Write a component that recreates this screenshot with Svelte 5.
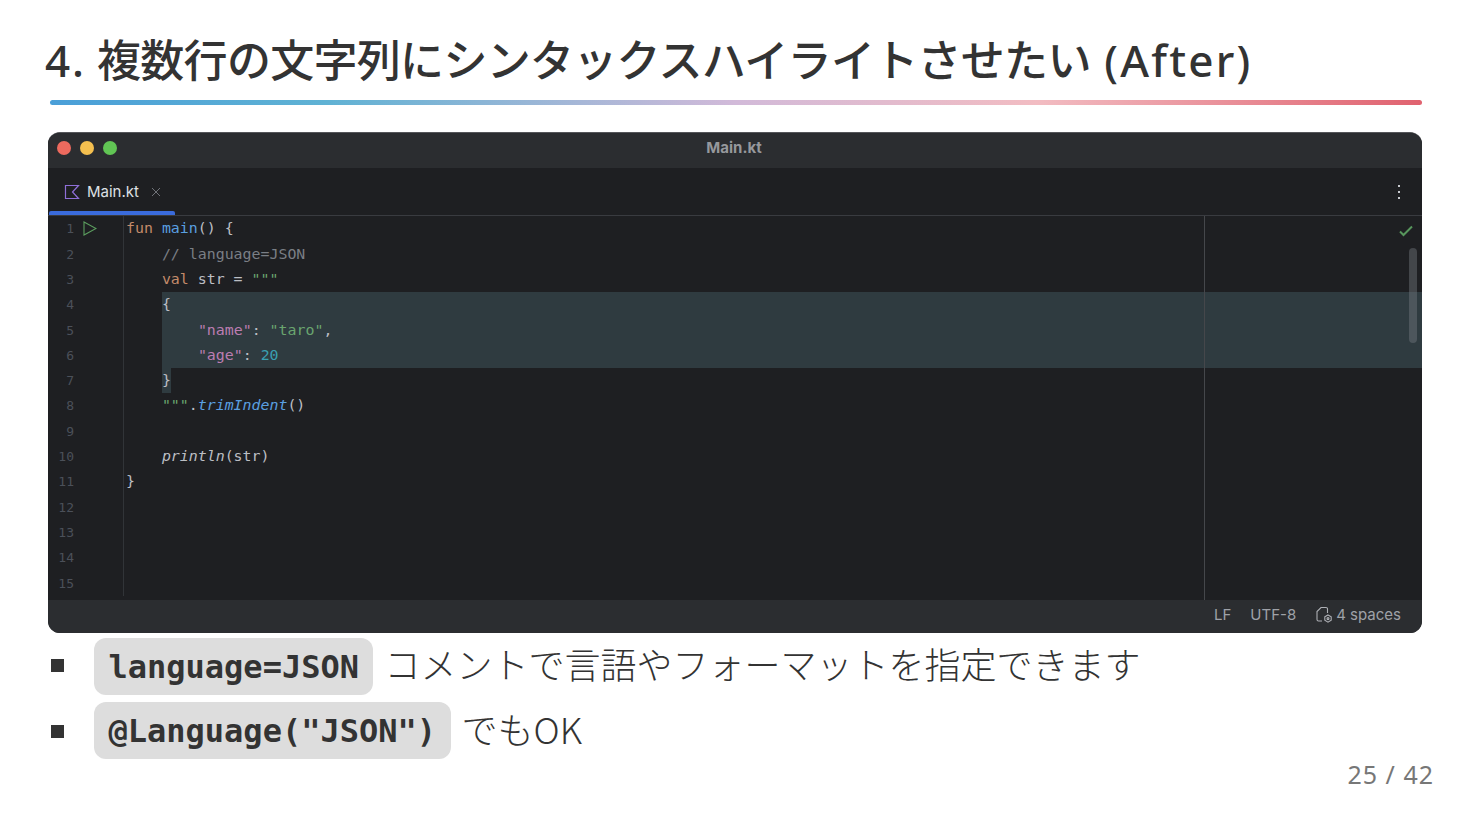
<script lang="ts">
  // k keyword, f function, c comment, s string, p json key, n number, i italic call
  type Tok = [string, string?];
  const lines: { toks: Tok[]; hl?: string }[] = [
    { toks: [["fun", "k"], [" "], ["main", "f"], ["() {"]] },
    { toks: [["    "], ["// language=JSON", "c"]] },
    { toks: [["    "], ["val", "k"], [" str = "], ['"""', "s"]] },
    { toks: [["{"]], hl: "full" },
    { toks: [["    "], ['"name"', "p"], [": "], ['"taro"', "s"], [","]], hl: "full" },
    { toks: [["    "], ['"age"', "p"], [": "], ["20", "n"]], hl: "full" },
    { toks: [["}", "brace"]], hl: "brace" },
    { toks: [["    "], ['"""', "s"], ["."], ["trimIndent", "fi"], ["()"]] },
    { toks: [] },
    { toks: [["    "], ["println", "i"], ["(str)"]] },
    { toks: [["}"]] },
    { toks: [] },
    { toks: [] },
    { toks: [] },
    { toks: [] },
  ];
</script>

<div class="slide">
  <h1><span class="lat num-part">{"4. "}</span>複数行の文字列にシンタックスハイライトさせたい<span class="lat after">{" (After)"}</span></h1>
  <div class="rule"></div>

  <div class="ide">
    <div class="titlebar">
      <div class="lights">
        <span class="light red"></span>
        <span class="light yellow"></span>
        <span class="light green"></span>
      </div>
      <span class="window-name">Main.kt</span>
    </div>

    <div class="tabs">
      <div class="tab">
        <svg width="16" height="16" viewBox="0 0 16 16" fill="none" stroke="#8f6fd8" stroke-width="1.2">
          <path d="M1.5 1.5h13L8.5 8l6 6.5h-13z" />
        </svg>
        <span class="tab-name">Main.kt</span>
        <svg class="close" width="10" height="10" viewBox="0 0 10 10" stroke="#6f7278" stroke-width="1">
          <path d="M1 1l8 8M9 1l-8 8" />
        </svg>
      </div>
      <div class="kebab"><i></i><i></i><i></i></div>
    </div>

    <div class="editor">
      {#each lines as line, i}
        <div class="row">
          <div class="gutter">
            <span class="num">{i + 1}</span>
            {#if i === 0}
              <svg class="run" width="14" height="15" viewBox="0 0 14 15" fill="none" stroke="#5c9e5f" stroke-width="1.1">
                <path d="M1 1l12 6.5L1 14z" />
              </svg>
            {/if}
          </div>
          <div class="code" class:full={line.hl === "full"}>
            <div class="text" class:brace={line.hl === "brace"}>{#each line.toks as t}<span class={t[1]}>{t[0]}</span>{/each}</div>
          </div>
        </div>
      {/each}
      <div class="margin-line"></div>
      <svg class="check" width="14" height="12" viewBox="0 0 14 12" fill="none" stroke="#57965c" stroke-width="2">
        <path d="M1 6.5l3.5 3.5L13 1.5" />
      </svg>
      <div class="scrollbar"></div>
    </div>

    <div class="status">
      <span>LF</span>
      <span>UTF-8</span>
      <span class="indent">
        <svg width="18" height="18" viewBox="0 0 18 18" fill="none" stroke="#aeb0b5" stroke-width="1.1">
          <path d="M7 15H3.5A1.5 1.5 0 0 1 2 13.5V5.5L6 1.5h5A1.5 1.5 0 0 1 12.5 3v4" />
          <path d="M13 9l3.2 1.8v3.5L13 16.2l-3.2-1.9v-3.5z" />
          <circle cx="13" cy="12.6" r="1" />
        </svg>
        4 spaces
      </span>
    </div>
  </div>

  <ul>
    <li><code>language=JSON</code><span>コメントで言語やフォーマットを指定できます</span></li>
    <li><code>@Language("JSON")</code><span>でもOK</span></li>
  </ul>

  <div class="page">25 / 42</div>
</div>

<style>
  :global(body) {
    margin: 0;
    background: #fff;
  }
  .slide {
    width: 1470px;
    height: 828px;
    overflow: hidden;
    box-sizing: border-box;
    padding: 0 48px;
    color: #333;
    font-family: "Noto Sans CJK JP", "Noto Sans", sans-serif;
  }
  h1 {
    margin: 0 0 0 -3px;
    padding-top: 26px;
    height: 64px;
    font-size: 44px;
    line-height: 64px;
    font-weight: 500;
    letter-spacing: -0.7px;
    white-space: nowrap;
    color: #333;
  }
  .lat {
    font-family: "Noto Sans", sans-serif;
    letter-spacing: 1.8px;
    white-space: pre;
  }
  .num-part {
    word-spacing: -2px;
  }
  .after {
    letter-spacing: 2.2px;
  }
  .rule {
    margin: 10px 0 0 2px;
    height: 5px;
    border-radius: 3px;
    background: linear-gradient(90deg, #4a9fd8 0%, #5fb2d4 20%, #d2bad9 50%, #f2bcc2 72%, #e0626f 100%);
  }
  .ide {
    margin-top: 27px;
    height: 501px;
    box-sizing: border-box;
    border-top: 1px solid #55565a;
    border-radius: 12px;
    overflow: hidden;
    background: #1e1f22;
    display: flex;
    flex-direction: column;
    font-family: Inter, "Noto Sans", sans-serif;
  }
  .titlebar {
    height: 35px;
    flex-shrink: 0;
    background: #2b2d30;
    display: flex;
    align-items: center;
    justify-content: center;
    position: relative;
  }
  .lights {
    position: absolute;
    left: 9px;
    top: 8px;
    display: flex;
    gap: 9px;
  }
  .light {
    width: 14px;
    height: 14px;
    border-radius: 50%;
  }
  .red { background: #ed6a5e; }
  .yellow { background: #f4bf4f; }
  .green { background: #61c554; }
  .window-name {
    font-size: 15px;
    font-weight: 700;
    color: #96989c;
    margin: 0 2px 6px 0;
  }
  .tabs {
    height: 48px;
    flex-shrink: 0;
    box-sizing: border-box;
    border-bottom: 1px solid #393b40;
    display: flex;
    align-items: center;
    justify-content: space-between;
    padding: 0 22px 0 1px;
    position: relative;
  }
  .tab {
    width: 126px;
    height: 47px;
    box-sizing: border-box;
    padding: 0 0 0 15px;
    display: flex;
    align-items: center;
    gap: 7px;
    position: relative;
  }
  .tab::after {
    content: "";
    position: absolute;
    left: 0;
    right: 0;
    bottom: 0;
    height: 4px;
    border-radius: 2px 2px 0 0;
    background: #3a6bdc;
  }
  .tab-name {
    font-size: 15px;
    color: #dfe1e5;
  }
  .close {
    margin-left: 5px;
  }
  .kebab {
    display: flex;
    flex-direction: column;
    gap: 4px;
  }
  .kebab i {
    width: 2px;
    height: 2px;
    background: #c8cacf;
  }
  .editor {
    flex: 1;
    position: relative;
    overflow: hidden;
    font-family: "DejaVu Sans Mono", monospace;
    font-size: 14.9px;
    color: #bcbec4;
    padding-top: 0.4px;
  }
  .row {
    height: 25.3px;
    display: flex;
  }
  .gutter {
    width: 76px;
    flex-shrink: 0;
    box-sizing: border-box;
    border-right: 1px solid #313438;
    position: relative;
    text-align: right;
    padding-right: 49px;
    line-height: 25.3px;
    font-size: 13px;
    color: #4b5059;
  }
  .run {
    position: absolute;
    left: 35px;
    top: 5px;
  }
  .code {
    flex: 1;
    padding-left: 2px;
    line-height: 25.3px;
    white-space: pre;
  }
  .text {
    display: block;
  }
  .code.full .text {
    margin-left: 36px;
    background: #2f3b40;
    position: relative;
    margin-right: 0;
  }
  .text.brace {
    margin-left: 36px;
    width: 9px;
    background: #2f3b40;
  }
  .k { color: #c48b6a; }
  .f { color: #5a9fe0; }
  .fi { color: #5a9fe0; font-style: italic; }
  .c { color: #7a7e85; }
  .s { color: #6aa56f; }
  .p { color: #bc7db2; }
  .n { color: #3a9fb0; }
  .i { font-style: italic; }
  .margin-line {
    position: absolute;
    left: 1156px;
    top: 0;
    bottom: 0;
    width: 1px;
    background: #45474b;
  }
  .check {
    position: absolute;
    right: 9px;
    top: 9px;
  }
  .scrollbar {
    position: absolute;
    right: 5px;
    top: 32px;
    width: 8px;
    height: 95px;
    border-radius: 4px;
    background: rgba(120, 124, 130, 0.42);
  }
  .status {
    height: 33px;
    flex-shrink: 0;
    box-sizing: border-box;
    padding: 0 21px 4px 0;
    background: #2b2d30;
    display: flex;
    align-items: center;
    justify-content: flex-end;
    gap: 19px;
    font-size: 15px;
    color: #9fa2a8;
  }
  .indent {
    display: flex;
    align-items: center;
    gap: 3px;
  }
  ul {
    list-style: none;
    margin: 5px 0 0;
    padding: 0;
  }
  li {
    height: 57px;
    margin-bottom: 7px;
    display: flex;
    align-items: center;
    padding-left: 46px;
    position: relative;
    font-size: 36px;
    font-weight: 300;
    color: #333;
    white-space: nowrap;
  }
  li::before {
    content: "";
    position: absolute;
    left: 3px;
    top: 21px;
    width: 13px;
    height: 13px;
    background: #333;
  }
  li + li::before {
    top: 23px;
  }
  code {
    display: block;
    height: 57px;
    line-height: 58px;
    box-sizing: border-box;
    padding: 0 14.5px;
    border-radius: 12px;
    background: #ddd;
    font-family: "DejaVu Sans Mono", monospace;
    font-size: 32px;
    font-weight: 700;
    margin-right: 11px;
    color: #333;
  }
  li span {
    position: relative;
    top: -4px;
  }
  li + li span {
    top: -3px;
  }
  .page {
    margin: -10px -12px 0 0;
    text-align: right;
    font-family: "Noto Sans", sans-serif;
    font-size: 25px;
    letter-spacing: 1px;
    line-height: 36px;
    color: #777;
  }
</style>
